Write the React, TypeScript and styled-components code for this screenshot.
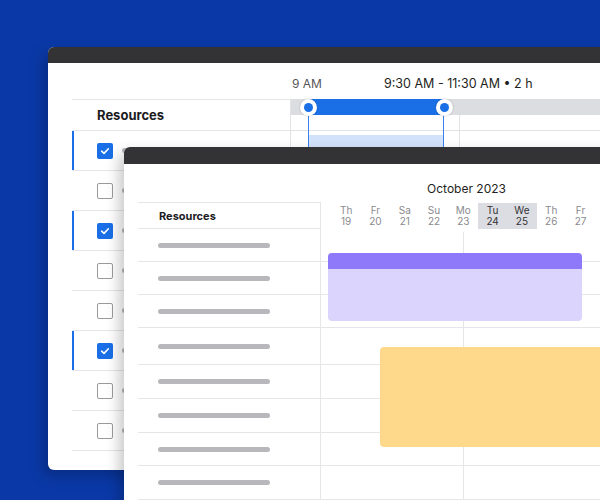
import styled, { createGlobalStyle } from "styled-components";

const GlobalStyle = createGlobalStyle`
  html, body { margin: 0; padding: 0; }
  body { font-family: Inter, "Noto Sans", sans-serif; background: #0a39a7; }
  * { box-sizing: border-box; }
`;

const Scene = styled.div`
  position: relative;
  width: 600px;
  height: 500px;
  overflow: hidden;
  background: #0a39a7;
`;

const Window = styled.div<{ $left: number; $top: number; $height: number }>`
  position: absolute;
  left: ${(p) => p.$left}px;
  top: ${(p) => p.$top}px;
  width: 640px;
  height: ${(p) => p.$height}px;
  background: #fff;
  border-radius: 6px;
  overflow: hidden;
  display: flex;
  flex-direction: column;
  box-shadow: -5px 6px 14px rgba(0, 0, 0, 0.22);
`;

const TitleBar = styled.div<{ $h: number }>`
  flex-shrink: 0;
  height: ${(p) => p.$h}px;
  background: #333335;
`;

/* ---------- back window ---------- */

const BackBody = styled.div`
  flex: 1;
  display: flex;
  flex-direction: column;
  padding-left: 24px;
`;

const TimeLabels = styled.div`
  height: 36px;
  display: grid;
  grid-template-columns: 218px 1fr;
`;

const TimeLabelRow = styled.div`
  display: flex;
  align-items: flex-end;
  padding: 0 0 8px 2px;
  font-size: 12px;
  line-height: 14px;
`;

const HourLabel = styled.span`
  color: #555558;
  width: 92px;
`;

const RangeLabel = styled.span`
  color: #1f1f22;
  font-size: 12.5px;
`;

const BackTable = styled.div`
  flex: 1;
  display: grid;
  grid-template-columns: 218px 1fr;
`;

const Column = styled.div`
  display: flex;
  flex-direction: column;
`;

const BackHeader = styled.div`
  height: 32px;
  border-top: 1px solid #e6e6e8;
  border-bottom: 1px solid #e6e6e8;
  display: flex;
  align-items: center;
  padding-left: 25px;
  font-size: 13px;
  font-weight: 700;
  color: #1c1c1f;
`;

const BackRow = styled.div<{ $selected: boolean }>`
  height: 40px;
  border-bottom: 1px solid #e6e6e8;
  display: flex;
  align-items: center;
  gap: 9px;
  padding-left: 25px;
  box-shadow: ${(p) => (p.$selected ? "inset 2px 0 0 #1a6fe6" : "none")};
`;

const Check = styled.div<{ $checked: boolean }>`
  width: 16px;
  height: 16px;
  border-radius: 2px;
  flex-shrink: 0;
  display: flex;
  align-items: center;
  justify-content: center;
  background: ${(p) => (p.$checked ? "#1a6fe6" : "#fff")};
  border: ${(p) => (p.$checked ? "none" : "1.5px solid #9b9b9f")};
`;

const Pill = styled.div<{ $width: number }>`
  width: ${(p) => p.$width}px;
  height: 5px;
  border-radius: 3px;
  background: #b7b7bc;
  flex-shrink: 0;
`;

const TimelinePane = styled.div`
  position: relative;
  border-left: 1px solid #e3e3e6;
  display: flex;
  flex-direction: column;
`;

const GreyBar = styled.div`
  height: 16px;
  background: #dcdde1;
  flex-shrink: 0;
`;

const SlotGrid = styled.div`
  flex: 1;
  display: grid;
  grid-template-columns: 169px 1fr;
  grid-template-rows: 16px 1fr;
`;

const Slot = styled.div<{ $right?: boolean; $bottom?: boolean }>`
  border-right: ${(p) => (p.$right ? "1px solid #e3e3e6" : "none")};
  border-bottom: ${(p) => (p.$bottom ? "1px solid #e3e3e6" : "none")};
`;

const Selection = styled.div`
  position: absolute;
  left: 17px;
  top: 0;
  bottom: 0;
  width: 136px;
  border-left: 1.5px solid #3a80ec;
  border-right: 1.5px solid #3a80ec;
  display: flex;
  flex-direction: column;
`;

const SelectionHead = styled.div`
  height: 16px;
  background: #1a6fe6;
`;

const SelectionFill = styled.div`
  flex: 1;
  margin-top: 20px;
  background: #d3e2fb;
`;

const Handle = styled.div<{ $side: "left" | "right" }>`
  position: absolute;
  top: 0;
  ${(p) => p.$side}: -9.5px;
  width: 17px;
  height: 17px;
  border-radius: 50%;
  background: #fff;
  box-shadow: 0 0 2px rgba(0, 0, 0, 0.25);
  display: flex;
  align-items: center;
  justify-content: center;

  &::after {
    content: "";
    width: 9px;
    height: 9px;
    border-radius: 50%;
    background: #1a6fe6;
  }
`;

/* ---------- front window ---------- */

const FrontBody = styled.div`
  flex: 1;
  display: flex;
  flex-direction: column;
  padding-left: 14px;
`;

const MonthRow = styled.div`
  height: 38px;
  display: grid;
  grid-template-columns: 183px 1fr;
`;

const MonthLabel = styled.div`
  width: 263px;
  margin-left: 14px;
  padding-top: 18px;
  text-align: center;
  font-size: 12px;
  line-height: 14px;
  color: #1f1f22;
`;

const FrontTable = styled.div`
  flex: 1;
  display: grid;
  grid-template-columns: 183px 1fr;
`;

const ResourceColumn = styled(Column)`
  border-right: 1px solid #e6e6e8;
`;

const FrontHeader = styled.div`
  height: 27px;
  border-top: 1px solid #e6e6e8;
  border-bottom: 1px solid #e6e6e8;
  display: flex;
  align-items: center;
  padding-left: 21px;
  font-size: 11px;
  font-weight: 700;
  color: #1c1c1f;
`;

const FrontRow = styled.div<{ $h: number }>`
  height: ${(p) => p.$h}px;
  border-bottom: 1px solid #e6e6e8;
  display: flex;
  align-items: center;
  padding-left: 20px;
`;

const DayStrip = styled.div`
  height: 27px;
  display: flex;
  padding: 1px 0 0 10.5px;
`;

const Day = styled.div<{ $active: boolean }>`
  width: 29.3px;
  height: 26px;
  display: flex;
  flex-direction: column;
  align-items: center;
  justify-content: center;
  font-size: 10px;
  line-height: 11px;
  color: ${(p) => (p.$active ? "#333336" : "#8a8a8e")};
  background: ${(p) => (p.$active ? "#dcdde2" : "transparent")};
`;

const GridBody = styled.div`
  position: relative;
  flex: 1;
  display: flex;
  flex-direction: column;
  background: linear-gradient(#e6e6e8, #e6e6e8) 142px 3px / 1px 100% no-repeat;
`;

const GridRow = styled.div<{ $h: number }>`
  height: ${(p) => p.$h}px;
  flex-shrink: 0;
  border-bottom: 1px solid #e6e6e8;
`;

const Event = styled.div<{ $left: number; $top: number; $width: number; $height: number; $tone: "purple" | "yellow" }>`
  position: absolute;
  left: ${(p) => p.$left}px;
  top: ${(p) => p.$top}px;
  width: ${(p) => p.$width}px;
  height: ${(p) => p.$height}px;
  border-radius: 4px;
  overflow: hidden;
  background: ${(p) => (p.$tone === "purple" ? "#dbd5fd" : "#fed98b")};
`;

const EventHead = styled.div`
  height: 16px;
  background: #8f79fb;
`;

const backRows = [true, false, true, false, false, true, false, false];
const frontRows = [33, 33, 33, 37, 34, 34, 33, 34, 34];
const days = [
  ["Th", "19"],
  ["Fr", "20"],
  ["Sa", "21"],
  ["Su", "22"],
  ["Mo", "23"],
  ["Tu", "24"],
  ["We", "25"],
  ["Th", "26"],
  ["Fr", "27"],
];

const CheckMark = () => (
  <svg width="10" height="10" viewBox="0 0 10 10">
    <polyline points="1.6,5.2 4,7.4 8.4,2.8" fill="none" stroke="#fff" strokeWidth="1.6" strokeLinecap="round" strokeLinejoin="round" />
  </svg>
);

const App = () => {
  return (
    <Scene>
      <GlobalStyle />
      <Window $left={48} $top={47} $height={423}>
        <TitleBar $h={16} />
        <BackBody>
          <TimeLabels>
            <div />
            <TimeLabelRow>
              <HourLabel>9 AM</HourLabel>
              <RangeLabel>9:30 AM - 11:30 AM • 2 h</RangeLabel>
            </TimeLabelRow>
          </TimeLabels>
          <BackTable>
            <Column>
              <BackHeader>Resources</BackHeader>
              {backRows.map((checked, i) => (
                <BackRow key={i} $selected={checked}>
                  <Check $checked={checked}>{checked && <CheckMark />}</Check>
                  <Pill $width={112} />
                </BackRow>
              ))}
            </Column>
            <TimelinePane>
              <GreyBar />
              <SlotGrid>
                <Slot $right $bottom />
                <Slot $bottom />
                <Slot $right />
                <Slot />
              </SlotGrid>
              <Selection>
                <SelectionHead />
                <SelectionFill />
                <Handle $side="left" />
                <Handle $side="right" />
              </Selection>
            </TimelinePane>
          </BackTable>
        </BackBody>
      </Window>

      <Window $left={124} $top={147} $height={400}>
        <TitleBar $h={17} />
        <FrontBody>
          <MonthRow>
            <div />
            <MonthLabel>October 2023</MonthLabel>
          </MonthRow>
          <FrontTable>
            <ResourceColumn>
              <FrontHeader>Resources</FrontHeader>
              {frontRows.map((h, i) => (
                <FrontRow key={i} $h={h}>
                  <Pill $width={112} />
                </FrontRow>
              ))}
            </ResourceColumn>
            <Column>
              <DayStrip>
                {days.map(([name, num], i) => (
                  <Day key={i} $active={i === 5 || i === 6}>
                    <span>{name}</span>
                    <span>{num}</span>
                  </Day>
                ))}
              </DayStrip>
              <GridBody>
                {frontRows.map((h, i) => (
                  <GridRow key={i} $h={h} />
                ))}
                <Event $tone="purple" $left={7} $top={24} $width={254} $height={68}>
                  <EventHead />
                </Event>
                <Event $tone="yellow" $left={59} $top={118} $width={320} $height={100} />
              </GridBody>
            </Column>
          </FrontTable>
        </FrontBody>
      </Window>
    </Scene>
  );
};

export default App;
